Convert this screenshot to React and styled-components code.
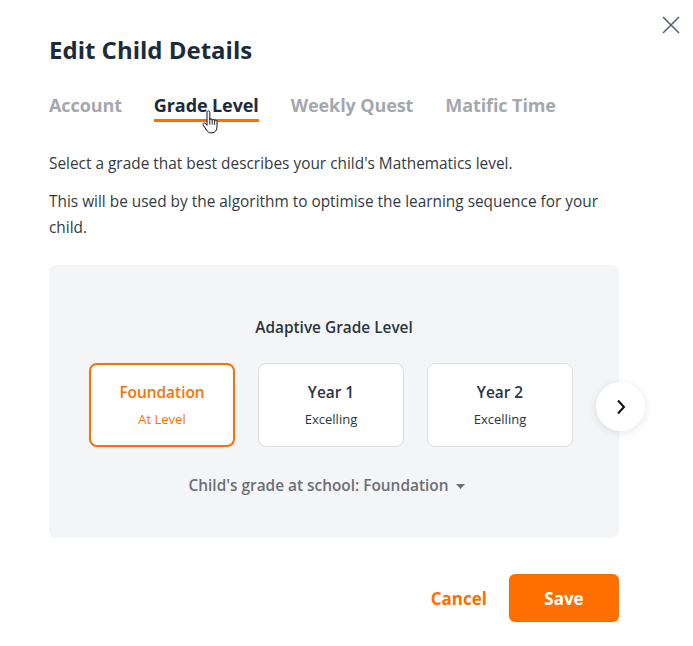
import React, { useState } from 'react';
import styled, { createGlobalStyle } from 'styled-components';

const GlobalStyle = createGlobalStyle`
  html, body {
    margin: 0;
    padding: 0;
    background: #fff;
  }
  body {
    font-family: 'Open Sans', 'Noto Sans', sans-serif;
    color: #2d3748;
  }
`;

const StyledModal = styled.div`
  position: relative;
  width: 693px;
  height: 646px;
  box-sizing: border-box;
  padding: 34px 74px 0 49px;
  background: #fff;
`;

const CloseButton = styled.button`
  position: absolute;
  top: 13px;
  right: 10px;
  width: 24px;
  height: 24px;
  padding: 0;
  border: 0;
  background: none;
  color: #5a6270;
  display: flex;
  align-items: center;
  justify-content: center;
  cursor: pointer;
`;

const Title = styled.h2`
  margin: 0;
  font-size: 24px;
  line-height: 32px;
  font-weight: 700;
  color: #1c2b3a;
`;

const Tabs = styled.div`
  display: flex;
  gap: 32px;
  margin-top: 26px;
`;

const Tab = styled.div`
  position: relative;
  font-size: 18px;
  line-height: 26px;
  font-weight: 700;
  letter-spacing: -0.1px;
  padding-bottom: 1px;
  color: ${({ active }) => (active ? '#1c2b3a' : '#a3a8ae')};
  border-bottom: 3px solid ${({ active }) => (active ? '#ff6f00' : 'transparent')};
  cursor: pointer;
`;

const Cursor = styled.svg`
  position: absolute;
  left: 48px;
  top: 18px;
`;

const Text = styled.p`
  margin: 0;
  font-size: 15.4px;
  line-height: 26px;
  color: #333a42;
`;

const Intro = styled.div`
  display: flex;
  flex-direction: column;
  gap: 12px;
  margin-top: 29px;
`;

const Panel = styled.div`
  position: relative;
  margin-top: 24px;
  height: 273px;
  box-sizing: border-box;
  padding-top: 52px;
  background: #f4f5f7;
  border-radius: 8px;
  display: flex;
  flex-direction: column;
  align-items: center;
`;

const PanelTitle = styled.div`
  font-size: 15.4px;
  line-height: 22px;
  font-weight: 600;
  color: #2a3542;
`;

const CardRow = styled.div`
  display: flex;
  gap: 23px;
  margin-top: 24px;
  margin-left: -6px;
`;

const Card = styled.div`
  width: 146px;
  height: 84px;
  box-sizing: border-box;
  border-radius: 8px;
  background: #fff;
  border: ${({ selected }) => (selected ? '2px solid #ff6f00' : '1px solid #dcdee2')};
  display: flex;
  flex-direction: column;
  align-items: center;
  justify-content: center;
  gap: 6px;
  color: ${({ selected }) => (selected ? '#ff6f00' : '#2a3542')};
  cursor: pointer;
`;

const CardName = styled.div`
  font-size: 15.4px;
  line-height: 22px;
  font-weight: 600;
`;

const CardStatus = styled.div`
  font-size: 13px;
  line-height: 18px;
`;

const NextButton = styled.button`
  position: absolute;
  right: -26px;
  top: 117px;
  width: 49px;
  height: 49px;
  border-radius: 50%;
  border: 0;
  background: #fff;
  box-shadow: 0 2px 10px rgba(0, 0, 0, 0.1);
  display: flex;
  align-items: center;
  justify-content: center;
  padding: 0;
  color: #111;
  cursor: pointer;
`;

const SchoolGrade = styled.div`
  margin-top: 28px;
  margin-right: 14px;
  display: flex;
  align-items: center;
  gap: 8px;
  font-size: 15.4px;
  line-height: 22px;
  font-weight: 600;
  color: #6b6f75;
`;

const Footer = styled.div`
  display: flex;
  justify-content: flex-end;
  align-items: center;
  gap: 22px;
  margin-top: 36px;
`;

const CancelButton = styled.button`
  border: 0;
  background: none;
  padding: 0;
  font-family: inherit;
  font-size: 17px;
  font-weight: 700;
  color: #ff6f00;
  cursor: pointer;
`;

const SaveButton = styled.button`
  width: 110px;
  height: 48px;
  border: 0;
  border-radius: 6px;
  background: #ff6f00;
  color: #fff;
  font-family: inherit;
  font-size: 17px;
  font-weight: 700;
  cursor: pointer;
`;

const tabs = ['Account', 'Grade Level', 'Weekly Quest', 'Matific Time'];

const grades = [
  { name: 'Foundation', status: 'At Level' },
  { name: 'Year 1', status: 'Excelling' },
  { name: 'Year 2', status: 'Excelling' },
];

const App = () => {
  const [active] = useState('Grade Level');
  const [selected, setSelected] = useState('Foundation');

  return (
    <>
      <GlobalStyle />
      <StyledModal>
        <CloseButton aria-label="Close">
          <svg width="18" height="18" viewBox="0 0 18 18" fill="none" stroke="currentColor" strokeWidth="1.6">
            <path d="M1 1l16 16M17 1L1 17" />
          </svg>
        </CloseButton>

        <Title>Edit Child Details</Title>

        <Tabs>
          {tabs.map((t) => (
            <Tab key={t} active={t === active}>
              {t}
              {t === active && (
                <Cursor width="18" height="26" viewBox="0 0 18 26">
                  <path
                    d="M5 2.5c0-1 .6-1.6 1.4-1.6S7.8 1.5 7.8 2.5V10c0-.8.5-1.3 1.2-1.3s1.2.5 1.2 1.3v.6c0-.8.5-1.3 1.2-1.3s1.2.5 1.2 1.3v.8c0-.8.5-1.3 1.2-1.3s1.2.5 1.2 1.3v5.4c0 3.4-1.9 6-5.1 6H9c-2.2 0-3.4-1-4.6-2.8L1.3 15.1c-.5-.8-.3-1.6.3-2 .6-.4 1.4-.2 1.9.4L5 15.3V2.5z"
                    fill="#fff"
                    stroke="#111"
                    strokeWidth="1"
                    strokeLinejoin="round"
                  />
                  <path d="M7.8 10v4.5M10.2 10.6v4M12.6 11.4v3.5" stroke="#111" strokeWidth="0.9" />
                </Cursor>
              )}
            </Tab>
          ))}
        </Tabs>

        <Intro>
          <Text>Select a grade that best describes your child's Mathematics level.</Text>
          <Text>
            This will be used by the algorithm to optimise the learning sequence for your child.
          </Text>
        </Intro>

        <Panel>
          <PanelTitle>Adaptive Grade Level</PanelTitle>
          <CardRow>
            {grades.map((g) => (
              <Card key={g.name} selected={g.name === selected} onClick={() => setSelected(g.name)}>
                <CardName>{g.name}</CardName>
                <CardStatus>{g.status}</CardStatus>
              </Card>
            ))}
          </CardRow>
          <NextButton aria-label="Next">
            <svg width="10" height="16" viewBox="0 0 10 16" fill="none" stroke="currentColor" strokeWidth="2">
              <path d="M2 1.5L8 8l-6 6.5" />
            </svg>
          </NextButton>
          <SchoolGrade>
            Child's grade at school: Foundation
            <svg width="9" height="5" viewBox="0 0 9 5">
              <path d="M0 0h9L4.5 5z" fill="#6b6f75" />
            </svg>
          </SchoolGrade>
        </Panel>

        <Footer>
          <CancelButton>Cancel</CancelButton>
          <SaveButton>Save</SaveButton>
        </Footer>
      </StyledModal>
    </>
  );
};

export default App;
